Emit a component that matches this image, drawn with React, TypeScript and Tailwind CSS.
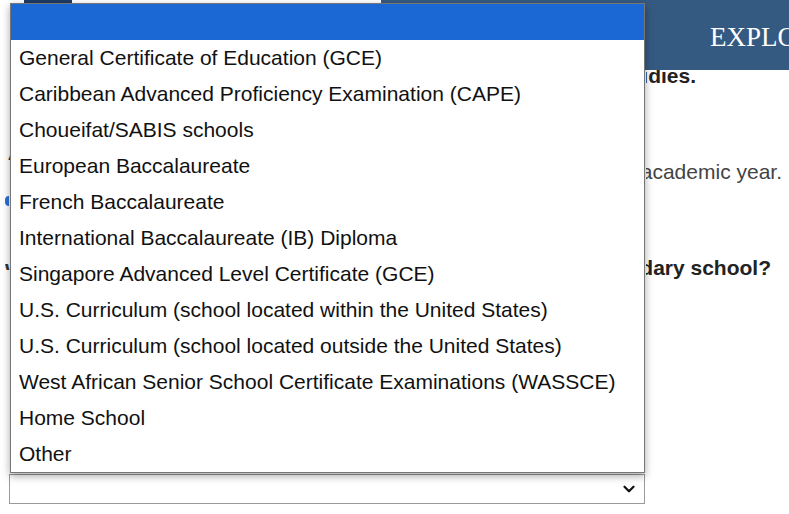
import { ChevronDown } from 'lucide-react'

const OPTIONS = [
  'General Certificate of Education (GCE)',
  'Caribbean Advanced Proficiency Examination (CAPE)',
  'Choueifat/SABIS schools',
  'European Baccalaureate',
  'French Baccalaureate',
  'International Baccalaureate (IB) Diploma',
  'Singapore Advanced Level Certificate (GCE)',
  'U.S. Curriculum (school located within the United States)',
  'U.S. Curriculum (school located outside the United States)',
  'West African Senior School Certificate Examinations (WASSCE)',
  'Home School',
  'Other',
]

// page text sits under the open list; only the tail past the list shows
function Tail({ right, className, children }: { right: number; className: string; children: string }) {
  return (
    <div className="ml-[646px] flex justify-end overflow-hidden" style={{ width: right - 646 }}>
      <p className={'shrink-0 whitespace-nowrap ' + className}>{children}</p>
    </div>
  )
}

export default function App() {
  return (
    <div
      className="relative h-[514px] w-[789px] overflow-hidden bg-white"
      style={{ fontFamily: '"Liberation Sans", Arial, sans-serif' }}
    >
      <header className="flex h-[70px]">
        <div className="w-[381px] shrink-0 bg-white pl-[24px]">
          <div className="h-[3px] w-[48px] bg-[#1d3a66]" />
        </div>
        <div className="flex min-w-0 flex-1 items-start overflow-hidden bg-[#355a82] pl-[329px] pt-[17px]">
          <span
            className="shrink-0 whitespace-nowrap text-[27px] text-white"
            style={{ fontFamily: '"Liberation Serif", serif' }}
          >
            EXPLORE
          </span>
        </div>
      </header>

      <div className="text-[21px] leading-[24px]">
        <Tail right={696} className="-mt-[6px] font-bold text-[#222]">
          Tell us about your secondary school studies.
        </Tail>
        <Tail right={782} className="mt-[72px] text-[#444]">
          Please list the school you attended for the 2023–2024 academic year.
        </Tail>
        <Tail right={771} className="mt-[72px] font-bold text-[#222]">
          What curriculum did you follow at your secondary school?
        </Tail>
      </div>

      {/* bits of the left column peeking out beside the list */}
      <div className="absolute left-[5px] top-[146px] flex flex-col text-[20px] font-bold text-[#333]">
        <span className="h-[14px] w-[5px] overflow-hidden">A</span>
        <span className="mt-[36px] h-[10px] w-[4px] rounded-l-full bg-[#2a72d8]" />
        <span className="mt-[50px] h-[14px] w-[5px] overflow-hidden">W</span>
      </div>

      {/* underlying select */}
      <div className="absolute left-[9px] top-[474px] flex h-[30px] w-[636px] items-center justify-end border border-[#9a9a9a] bg-white pr-[6px]">
        <ChevronDown className="size-[18px] text-[#111]" strokeWidth={3} />
      </div>

      {/* open dropdown list */}
      <ul className="absolute left-[10px] top-[3px] w-[635px] border border-[#767676] bg-white text-[21px] text-[#111] shadow-[0_3px_8px_rgba(0,0,0,0.35)]">
        <li className="h-[36px] bg-[#1b67d3]" />
        {OPTIONS.map((option) => (
          <li key={option} className="flex h-[36px] items-center whitespace-nowrap pl-[8px]">
            {option}
          </li>
        ))}
      </ul>
    </div>
  )
}
